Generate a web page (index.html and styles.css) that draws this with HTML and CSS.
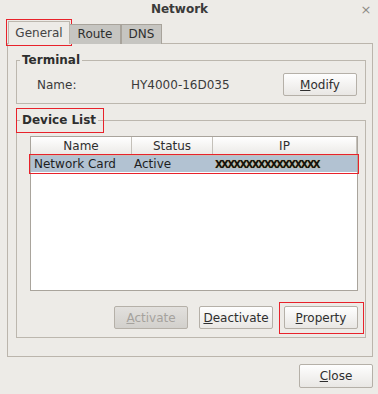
FILE: index.html
```html
<!DOCTYPE html>
<html lang="en">
<head>
  <meta charset="UTF-8" />
  <title>Network</title>
  <link rel="stylesheet" href="styles.css">
</head>
<body>

<div class="window">
  <div class="titlebar">
    <span class="title">Network</span>
    <span class="close-x">×</span>
  </div>

  <div class="tabs">
    <div class="tab active mark">General</div>
    <div class="tab route">Route</div>
    <div class="tab dns">DNS</div>
  </div>

  <div class="panel">
    <fieldset class="group terminal">
      <legend>Terminal</legend>
      <div class="term-row">
        <span class="label">Name:</span>
        <span class="value">HY4000-16D035</span>
        <button class="btn modify"><u>M</u>odify</button>
      </div>
    </fieldset>

    <fieldset class="group devices">
      <legend><span class="boxed legend-mark">Device List</span></legend>
      <div class="group-body">
        <div class="list">
          <div class="list-head">
            <div class="col c-name">Name</div>
            <div class="col c-status">Status</div>
            <div class="col c-ip">IP</div>
          </div>
          <div class="list-row selected mark">
            <div class="cell c-name">Network Card</div>
            <div class="cell c-status">Active</div>
            <div class="cell c-ip"><span class="scribble">XXXXXXXXXXXXXXXXX</span></div>
          </div>
        </div>
        <div class="actions">
          <button class="btn disabled"><u>A</u>ctivate</button>
          <button class="btn"><u>D</u>eactivate</button>
          <button class="btn boxed prop"><u>P</u>roperty</button>
        </div>
      </div>
    </fieldset>
  </div>

  <div class="footer">
    <button class="btn close"><u>C</u>lose</button>
  </div>
</div>

</body>
</html>
```

FILE: styles.css
```css
body {
  margin: 0;
  background: #edebe7;
  font-family: 'DejaVu Sans', sans-serif;
  font-size: 12px;
  color: #2e2e2e;
}

.window {
  width: 378px;
  height: 394px;
}

.titlebar {
  display: flex;
  align-items: center;
  height: 18px;
}

.title {
  flex: 1;
  text-align: center;
  font-weight: bold;
  color: #3a3a3a;
}

.close-x {
  width: 14px;
  margin-right: 5px;
  text-align: center;
  color: #8e8b87;
  font-size: 13px;
}

.tabs {
  display: flex;
  align-items: flex-end;
  margin: 3px 0 0 8px;
  height: 23px;
  position: relative;
  z-index: 1;
}

.tab {
  box-sizing: border-box;
  height: 20px;
  line-height: 19px;
  text-align: center;
  background: #c6c5c1;
  border: 1px solid #a8a39b;
  border-bottom: none;
  color: #2e2e2e;
}

.tab.active {
  width: 62px;
  height: 23px;
  line-height: 22px;
  background: #edebe7;
  border-color: #bcb7ae;
  color: #444;
}

.tab.route {
  width: 51px;
  border-left: none;
}

.tab.dns {
  width: 41px;
  border-left: 1px solid #a8a39b;
}

.mark {
  outline: 1px solid #e8222b;
}

.tab.mark {
  outline-offset: 1px;
}

/* red annotation boxes with square corners */
.boxed {
  position: relative;
}

.boxed::after {
  content: '';
  position: absolute;
  border: 1px solid #e8222b;
  pointer-events: none;
}

.panel {
  margin: -1px 5px 0 7px;
  border: 1px solid #bbb5ac;
  height: 304px;
  padding: 8px 6px 0 8px;
}

.group {
  margin: 0;
  padding: 0;
  border: 1px solid #bcb7ae;
}

.group legend {
  margin-left: 3px;
  padding: 0 2px;
  font-weight: bold;
  font-size: 12px;
  line-height: 16px;
  color: #2e2e2e;
}

.terminal .term-row {
  padding: 5px 8px 7px 20px;
}

.term-row {
  display: flex;
  align-items: center;
}

.term-row .label {
  width: 94px;
  color: #3a3a3a;
}

.term-row .value {
  flex: 1;
  color: #3a3a3a;
}

.btn {
  font-family: 'DejaVu Sans', sans-serif;
  font-size: 12px;
  color: #2e2e2e;
  background: linear-gradient(#fefefe, #e9e7e4);
  border: 1px solid #b5b0a8;
  border-radius: 2px;
  height: 23px;
  width: 74px;
  padding: 0;
}

.devices {
  margin-top: 8px;
}

.group-body {
  padding: 0 7px 8px 13px;
}

.legend-mark {
  display: inline-block;
}

.legend-mark::after {
  top: -4px;
  bottom: -5px;
  left: -6px;
  right: -8px;
}

.list {
  margin-top: 8px;
  height: 153px;
  background: #fff;
  border: 1px solid #a9a49c;
}

.list-head {
  display: flex;
  height: 19px;
}

.col {
  text-align: center;
  line-height: 18px;
  background: linear-gradient(#ffffff, #ebe9e6);
  border-right: 1px solid #c4c0b9;
  border-bottom: 1px solid #c4c0b9;
  color: #2e2e2e;
}

.c-name {
  width: 100px;
}

.c-status {
  width: 80px;
}

.c-ip {
  flex: 1;
}

.list-row {
  display: flex;
  height: 16px;
  line-height: 16px;
  background: #b2c2d2;
  outline-offset: 1px;
}

.cell {
  padding-left: 3px;
  color: #1e1e1e;
}

.cell.c-name {
  width: 97px;
}

.cell.c-status {
  width: 77px;
}

.cell.c-ip {
  padding-left: 4px;
}

.scribble {
  font-weight: bold;
  font-size: 10px;
  letter-spacing: -1.6px;
  color: #111;
  text-shadow: 0 0 1px #c9a83a;
}

.actions {
  display: flex;
  justify-content: flex-end;
  gap: 11px;
  margin-top: 15px;
}

.btn.disabled {
  background: linear-gradient(#e2e0dd, #d2d0cc);
  color: #a5a29d;
}

.prop::after {
  top: -5px;
  bottom: -6px;
  left: -6px;
  right: -7px;
}

.footer {
  display: flex;
  justify-content: flex-end;
  padding: 7px 5px 0 0;
}

.close {
  height: 24px;
}
```
